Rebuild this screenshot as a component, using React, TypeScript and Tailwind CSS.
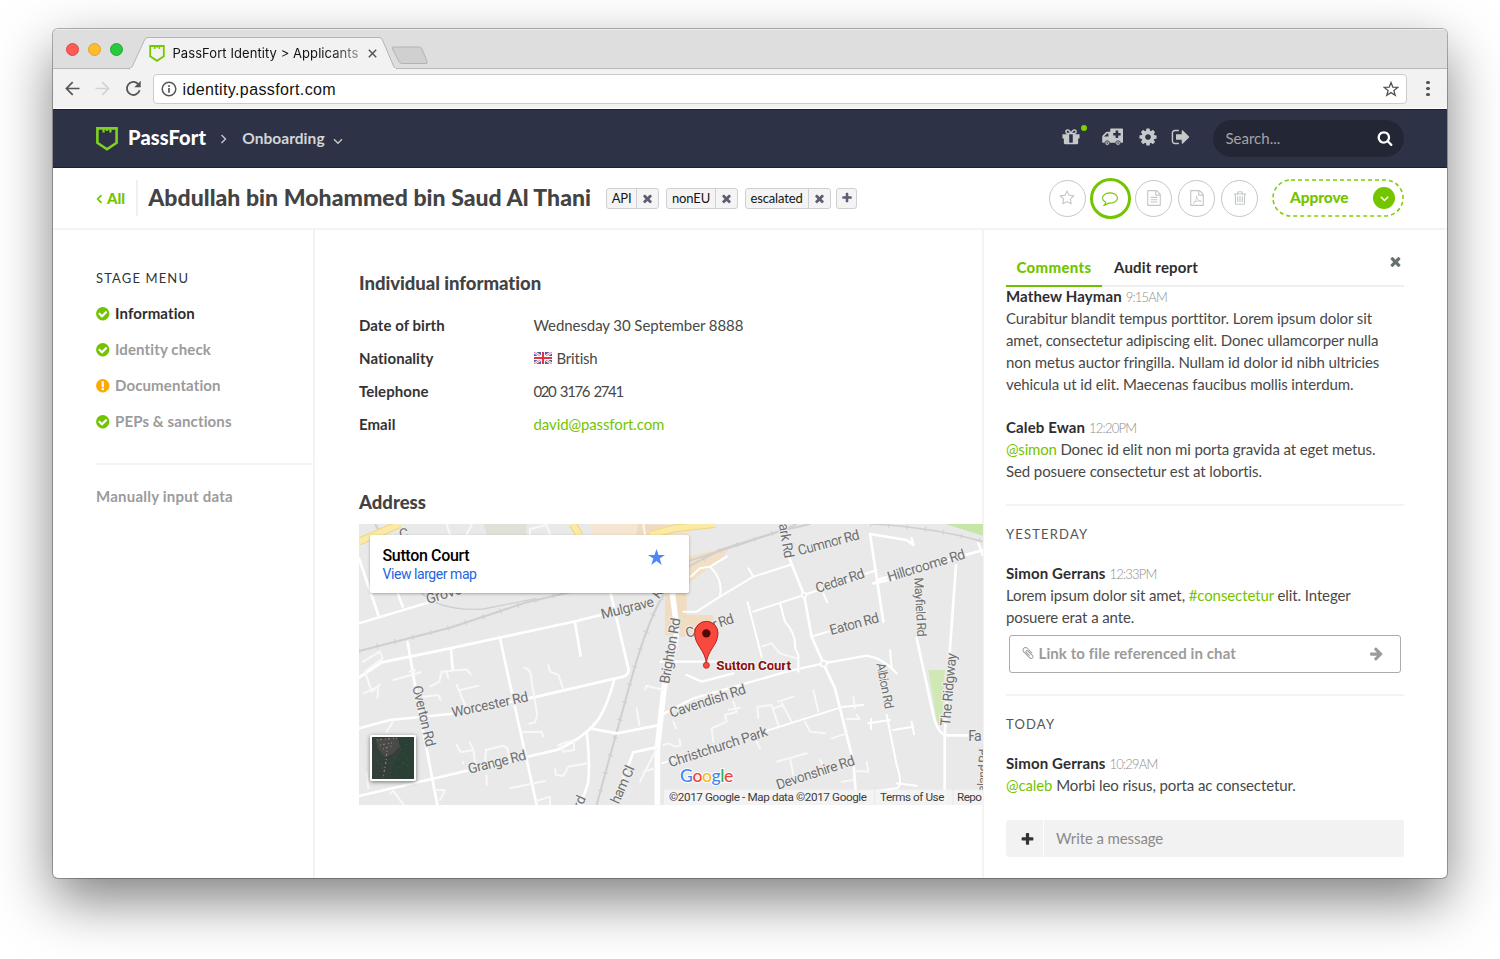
import type { ReactNode } from 'react';

const FA = {
  times: 'M1490 1322q0 40-28 68l-136 136q-28 28-68 28t-68-28l-294-294-294 294q-28 28-68 28t-68-28l-136-136q-28-28-28-68t28-68l294-294-294-294q-28-28-28-68t28-68l136-136q28-28 68-28t68 28l294 294 294-294q28-28 68-28t68 28l136 136q28 28 28 68t-28 68l-294 294 294 294q28 28 28 68z',
  plus: 'M1600 736v192q0 40-28 68t-68 28h-416v416q0 40-28 68t-68 28h-192q-40 0-68-28t-28-68v-416h-416q-40 0-68-28t-28-68v-192q0-40 28-68t68-28h416v-416q0-40 28-68t68-28h192q40 0 68 28t28 68v416h416q40 0 68 28t28 68z',
  check: 'M1412 734q0-28-18-46l-91-90q-19-19-45-19t-45 19l-408 407-226-226q-19-19-45-19t-45 19l-91 90q-18 18-18 46 0 27 18 45l362 362q19 19 45 19 27 0 46-19l543-543q18-18 18-45zm252 162q0 209-103 385.5t-279.5 279.5-385.5 103-385.5-103-279.5-279.5-103-385.5 103-385.5 279.5-279.5 385.5-103 385.5 103 279.5 279.5 103 385.5z',
  warn: 'M896 128q209 0 385.5 103t279.5 279.5 103 385.5-103 385.5-279.5 279.5-385.5 103-385.5-103-279.5-279.5-103-385.5 103-385.5 279.5-279.5 385.5-103zm128 1247v-190q0-14-9-23.5t-22-9.5h-192q-13 0-23 10t-10 23v190q0 13 10 23t23 10h192q13 0 22-9.5t9-23.5zm-2-344l18-621q0-12-10-18-10-8-24-8h-220q-14 0-24 8-10 6-10 18l17 621q0 10 10 17.5t24 7.5h185q14 0 23.5-7.5t10.5-17.5z',
  search: 'M1216 832q0-185-131.500-316.500t-316.500-131.500-316.500 131.500-131.500 316.500 131.500 316.500 316.500 131.500 316.500-131.500 131.500-316.500zm512 832q0 52-38 90t-90 38q-54 0-90-38l-343-342q-179 124-399 124-143 0-273.500-55.500t-225-150-150-225-55.500-273.500 55.500-273.500 150-225 225-150 273.500-55.500 273.500 55.500 225 150 150 225 55.500 273.500q0 220-124 399l343 343q37 37 37 90z',
  signOut: 'M704 1440q0 4 1 20t.5 26.500-3 23.500-10 19.500-20.500 6.500h-320q-119 0-203.500-84.500t-84.500-203.500v-704q0-119 84.500-203.500t203.500-84.500h320q13 0 22.500 9.500t9.500 22.500q0 4 1 20t.5 26.500-3 23.500-10 19.500-20.500 6.500h-320q-66 0-113 47t-47 113v704q0 66 47 113t113 47h312l11.500 1 11.500 3 8 5.500 7 9 2 13.500zm928-544q0 26-19 45l-544 544q-19 19-45 19t-45-19-19-45v-288h-448q-26 0-45-19t-19-45v-384q0-26 19-45t45-19h448v-288q0-26 19-45t45-19 45 19l544 544q19 19 19 45z',
  star: 'M1201 1004l306-297-422-62-189-382-189 382-422 62 306 297-73 421 378-199 377 199zm527-357q0 22-26 48l-363 354 86 500q1 7 1 20 0 50-41 50-19 0-40-12l-449-236-449 236q-22 12-40 12-21 0-31.500-14.500t-10.500-35.500q0-6 2-20l86-500-364-354q-25-27-25-48 0-37 56-46l502-73 225-455q19-41 49-41t49 41l225 455 502 73q56 9 56 46z',
  comment: 'M896 384q-204 0-381.500 69.500t-282 187.500-104.500 255q0 112 71.500 213.500t201.500 175.500l87 50-27 96q-24 91-70 172 152-63 275-171l43-38 57 6q69 8 130 8 204 0 381.500-69.500t282-187.500 104.500-255-104.500-255-282-187.500-381.500-69.500zm896 512q0 174-120 321.500t-326 233-450 85.500q-70 0-145-8-198 175-460 242-49 14-114 22h-5q-15 0-27-10.500t-16-27.500v-1q-3-4-.5-12t2-10 4.500-9.500l6-9 7-8.500 8-9q7-8 31-34.500t34.500-38 31-39.500 32.500-51 27-59 26-76q-157-89-247.500-220t-90.500-281q0-174 120-321.500t326-233 450-85.500 450 85.500 326 233 120 321.500z',
  file: 'M1596 380q28 28 48 76t20 88v1152q0 40-28 68t-68 28h-1344q-40 0-68-28t-28-68v-1600q0-40 28-68t68-28h896q40 0 88 20t76 48zm-444-244v376h376q-10-29-22-41l-313-313q-12-12-41-22zm384 1528v-1024h-416q-40 0-68-28t-28-68v-416h-768v1536h1280z',
  fileLines: 'M512 800q0-14 9-23t23-9h704q14 0 23 9t9 23v64q0 14-9 23t-23 9h-704q-14 0-23-9t-9-23v-64zm736 224q14 0 23 9t9 23v64q0 14-9 23t-23 9h-704q-14 0-23-9t-9-23v-64q0-14 9-23t23-9h704zm0 256q14 0 23 9t9 23v64q0 14-9 23t-23 9h-704q-14 0-23-9t-9-23v-64q0-14 9-23t23-9h704z',
  trash: 'M704 736v576q0 14-9 23t-23 9h-64q-14 0-23-9t-9-23v-576q0-14 9-23t23-9h64q14 0 23 9t9 23zm256 0v576q0 14-9 23t-23 9h-64q-14 0-23-9t-9-23v-576q0-14 9-23t23-9h64q14 0 23 9t9 23zm256 0v576q0 14-9 23t-23 9h-64q-14 0-23-9t-9-23v-576q0-14 9-23t23-9h64q14 0 23 9t9 23zm128 724v-948h-896v948q0 22 7 40.500t14.500 27 10.500 8.500h832q3 0 10.500-8.500t14.500-27 7-40.500zm-672-1076h448l-48-117q-7-9-17-11h-317q-10 2-17 11zm928 32v64q0 14-9 23t-23 9h-96v948q0 83-47 143.500t-113 60.500h-832q-66 0-113-58.500t-47-141.500v-952h-96q-14 0-23-9t-9-23v-64q0-14 9-23t23-9h309l70-167q15-37 54-63t79-26h320q40 0 79 26t54 63l70 167h309q14 0 23 9t9 23z',
  arrow: 'M1600 960q0 54-37 91l-651 651q-39 37-91 37-51 0-90-37l-75-75q-38-38-38-91t38-91l293-293h-704q-52 0-84.500-37.500t-32.500-90.500v-128q0-53 32.500-90.500t84.500-37.500h704l-293-294q-38-36-38-90t38-90l75-75q38-38 90-38 53 0 91 38l651 651q37 35 37 90z',
  cog: 'M1152 896q0-106-75-181t-181-75-181 75-75 181 75 181 181 75 181-75 75-181zm512-109v222q0 12-8 23t-20 13l-185 28q-19 54-39 91 35 50 107 138 10 12 10 25t-9 23q-27 37-99 108t-94 71q-12 0-26-9l-138-108q-44 23-91 38-16 136-29 186-7 28-36 28h-222q-14 0-24.500-8.500t-11.500-21.500l-28-184q-49-16-90-37l-141 107q-10 9-25 9-14 0-25-11-126-114-165-168-7-10-7-23 0-12 8-23 15-21 51-66.500t54-70.500q-27-50-41-99l-183-27q-13-2-21-12.500t-8-23.500v-222q0-12 8-23t19-13l186-28q14-46 39-92-40-57-107-138-10-12-10-24 0-10 9-23 26-36 98.500-107.500t94.500-71.500q13 0 26 10l138 107q44-23 91-38 16-136 29-186 7-28 36-28h222q14 0 24.500 8.500t11.500 21.500l28 184q49 16 90 37l142-107q9-9 24-9 13 0 25 10 129 119 165 170 7 8 7 22 0 12-8 23-15 21-51 66.500t-54 70.500q26 50 41 98l183 28q13 2 21 12.500t8 23.500z',
  gift: 'M1056 1356v-716h-320v716q0 25 18 38.500t46 13.500h192q28 0 46-13.500t18-38.500zm-456-844h195l-126-161q-26-31-69-31-40 0-68 28t-28 68 28 68 68 28zm688-96q0-40-28-68t-68-28q-43 0-69 31l-125 161h194q40 0 68-28t28-68zm376 256v320q0 14-9 23t-23 9h-96v416q0 40-28 68t-68 28h-1088q-40 0-68-28t-28-68v-416h-96q-14 0-23-9t-9-23v-320q0-14 9-23t23-9h440q-93 0-158.500-65.500t-65.500-158.500 65.500-158.500 158.500-65.500q107 0 168 77l128 165 128-165q61-77 168-77 93 0 158.500 65.500t65.500 158.500-65.500 158.500-158.500 65.500h440q14 0 23 9t9 23z',
  clip: 'M1596 1385q0 117-79 196t-196 79q-135 0-235-100l-777-776q-113-115-113-271 0-159 110-270t269-111q158 0 273 113l605 606q10 10 10 22 0 16-30.500 46.500t-46.500 30.500q-13 0-23-10l-606-607q-79-77-181-77-106 0-179 75t-73 181q0 105 76 181l776 777q63 63 145 63 64 0 106-42t42-106q0-82-63-145l-581-581q-26-24-60-24-29 0-48 19t-19 48q0 32 25 59l410 410q10 10 10 22 0 16-31 47t-47 31q-12 0-22-10l-410-410q-63-61-63-149 0-82 57-139t139-57q88 0 149 63l581 581q100 98 100 235z',
};

function Icon({ d, className, children }: { d: string; className: string; children?: ReactNode }) {
  return (
    <svg viewBox="0 0 1792 1792" className={`shrink-0 ${className}`} fill="currentColor">
      <path d={d} />
      {children}
    </svg>
  );
}

function Shield({ className }: { className: string }) {
  return (
    <svg viewBox="0 0 22 24" className={`shrink-0 ${className}`} fill="none" stroke="currentColor" strokeWidth="2.6">
      <path d="M1.400 1.400H20.600V15.800L11 22.300L1.400 15.800Z" />
      <path d="M7.600 1.500V5.600M14.400 1.500V5.600M11 1.500V4" strokeWidth="2.200" />
    </svg>
  );
}

function TabStrip() {
  return (
    <div className="flex h-10 shrink-0 items-stretch bg-[#dedede] shadow-[inset_0_-1px_0_#b9b9b9,inset_0_1px_0_#ececec]">
      <div className="flex w-[78px] items-center gap-[9px] pl-[12.5px]">
        <span className="size-[13px] rounded-full border border-[#e2463f] bg-[#fc5b57]" />
        <span className="size-[13px] rounded-full border border-[#e1a325] bg-[#fdbc2e]" />
        <span className="size-[13px] rounded-full border border-[#1fae30] bg-[#27c93f]" />
      </div>
      <div className="relative flex w-[266px] items-center pt-[9px] pl-[17.5px]">
        <svg className="absolute inset-0 overflow-visible" width="266" height="40" viewBox="0 0 266 40">
          <path d="M-2 39.500Q.5 39.500 1.500 37L13.500 11Q14.500 8.500 17 8.500H248Q250.500 8.500 251.500 11L262.500 37Q263.500 39.500 265.500 39.500V40H-2Z" fill="#f2f2f2" stroke="#b5b5b5" />
          <path d="M-1 40H265" stroke="#f2f2f2" strokeWidth="2" />
        </svg>
        <Shield className="relative h-[17px] w-4 text-[#75c900]" />
        <span className="relative ml-[8px] w-[187px] overflow-hidden whitespace-nowrap bg-[linear-gradient(90deg,#111_84%,#999_100%)] bg-clip-text font-['Inter'] text-[13px] tracking-[0.07px] text-transparent">
          PassFort Identity &gt; Applicants
        </span>
        <svg className="relative ml-[8px]" width="9" height="9" viewBox="0 0 9 9" stroke="#555" strokeWidth="1.500">
          <path d="M.8.8L8.200 8.200M8.200.8L.8 8.200" />
        </svg>
      </div>
      <svg className="-ml-[6px] mt-[17px]" width="38" height="19" viewBox="0 0 38 19">
        <path d="M2.500 1H28Q30 1 31 3L36 15.500Q37 17.500 35 17.500H11Q9 17.500 8 15.500L1.500 3Q.5 1 2.500 1Z" fill="#d0d0d0" stroke="#b3b3b3" />
      </svg>
    </div>
  );
}

function Toolbar() {
  return (
    <div className="flex h-10 shrink-0 items-center border-b border-white bg-[#f2f2f2] text-[#555]">
      <svg className="ml-[12px]" width="15" height="15" viewBox="0 0 15 15" fill="none" stroke="currentColor" strokeWidth="1.700">
        <path d="M14.500 7.500H1.500M7.700 1.200L1.400 7.500L7.700 13.800" />
      </svg>
      <svg className="ml-[15px] text-[#d2d2d2]" width="15" height="15" viewBox="0 0 15 15" fill="none" stroke="currentColor" strokeWidth="1.700">
        <path d="M.5 7.500H13.500M7.300 1.200L13.600 7.500L7.300 13.800" />
      </svg>
      <svg className="ml-[15px]" width="17" height="17" viewBox="0 0 17 17" fill="none" stroke="currentColor" strokeWidth="1.800">
        <path d="M14.600 10.300A6.500 6.500 0 1 1 13 3.900" />
        <path d="M15.700.8V7.200H9.300Z" fill="currentColor" stroke="none" />
      </svg>
      <div className="ml-[11px] flex h-[30px] w-[1254px] items-center rounded-[4px] border border-[#cbcbcb] bg-white px-[7px]">
        <svg width="16" height="16" viewBox="0 0 16 16" fill="none" stroke="#555" strokeWidth="1.500">
          <circle cx="8" cy="8" r="6.800" />
          <path d="M8 7V11.700M8 4.200V5.900" strokeWidth="1.700" />
        </svg>
        <span className="ml-[5.500px] flex-1 pt-[2px] font-['Liberation_Sans'] text-[16px] tracking-[0.38px] text-[#111]">identity.passfort.com</span>
        <svg width="16" height="16" viewBox="0 0 16 16" fill="none" stroke="#555" strokeWidth="1.300">
          <path d="M8 1.500L9.800 6.100L14.700 6.400L10.900 9.500L12.200 14.300L8 11.600L3.800 14.300L5.100 9.500L1.300 6.400L6.200 6.100Z" />
        </svg>
      </div>
      <div className="ml-[19px] flex flex-col gap-[2.500px]">
        <span className="size-[3.500px] rounded-full bg-[#555]" />
        <span className="size-[3.500px] rounded-full bg-[#555]" />
        <span className="size-[3.500px] rounded-full bg-[#555]" />
      </div>
    </div>
  );
}

function NavBar() {
  return (
    <div className="flex h-[59px] shrink-0 items-center border-y border-[#1b2033] bg-[#2e3246] pr-[43px] pl-[43px] text-[#c6c9c9]">
      <Shield className="h-6 w-[22px] text-[#7ed321]" />
      <span className="-mt-[3px] ml-[10px] text-[20px] font-black tracking-[0.15px] text-white">PassFort</span>
      <svg className="mt-px ml-[13.500px]" width="7" height="10" viewBox="0 0 7 10" fill="none" stroke="currentColor" strokeWidth="1.400">
        <path d="M1.500 1L5.500 5L1.500 9" />
      </svg>
      <span className="ml-[15.500px] text-[15.5px] font-bold tracking-[0.05px] text-[#d3d5d6]">Onboarding</span>
      <svg className="mt-[5px] ml-[8px]" width="10" height="7" viewBox="0 0 10 7" fill="none" stroke="currentColor" strokeWidth="1.400">
        <path d="M1 1.200L5 5.200L9 1.200" />
      </svg>
      <div className="-mt-[3px] ml-auto flex items-center">
        <div className="relative">
          <Icon d={FA.gift} className="size-5" />
          <span className="absolute -top-[2px] left-[19.500px] size-[6px] rounded-full bg-[#7fd000]" />
        </div>
        <svg className="ml-[21px]" width="21" height="18" viewBox="0 0 21 18" fill="currentColor">
          <path
            fillRule="evenodd"
            d="M9 .5H20.200Q21 .5 21 1.300V14Q21 14.800 20.200 14.800H18.700A2.800 2.800 0 0 1 13.200 14.800H8A2.800 2.800 0 0 1 2.500 14.800H1Q.2 14.800.2 14V9Q.2 8 .9 7.200L3.900 4.300Q4.500 3.700 5.300 3.700H8.200V1.300Q8.200.5 9 .5ZM2 8.600H6.400V5.600H5.100L2.500 8.100ZM13.600 2.600V5H11.200V7.600H13.600V10H16.200V7.600H18.600V5H16.200V2.600Z"
          />
          <circle cx="5.200" cy="15.100" r="2.300" stroke="#2e3246" strokeWidth=".9" />
          <circle cx="16" cy="15.100" r="2.300" stroke="#2e3246" strokeWidth=".9" />
          <circle cx="5.200" cy="15.100" r=".8" fill="#2e3246" />
          <circle cx="16" cy="15.100" r=".8" fill="#2e3246" />
        </svg>
        <Icon d={FA.cog} className="ml-[15px] size-5" />
        <Icon d={FA.signOut} className="ml-[13px] size-5" />
      </div>
      <div className="ml-[22px] flex h-[37px] w-[191px] items-center justify-between rounded-full bg-[#232634] pr-[11px] pl-[12.500px]">
        <span className="text-[15px] text-[#a3a4a8]">Search...</span>
        <Icon d={FA.search} className="mb-px size-4 text-white" />
      </div>
    </div>
  );
}

function Tag({ label }: { label: string }) {
  return (
    <span className="flex h-[21px] items-stretch rounded-[3px] border border-[#cfcfd6] bg-[#f4f4f5] text-[13px] tracking-[-0.15px] text-[#151515]">
      <span className="flex items-center px-[5px] pt-[2px]">{label}</span>
      <span className="flex w-[22px] items-center justify-center border-l border-[#cfcfd6]">
        <Icon d={FA.times} className="size-[13px] text-[#5f5d74]" />
      </span>
    </span>
  );
}

function RoundButton({ children }: { children: ReactNode }) {
  return <span className="flex size-[37px] items-center justify-center rounded-full border border-[#c3c8c6] text-[#c3c8c6]">{children}</span>;
}

function PageHeader() {
  return (
    <div className="flex h-[62px] shrink-0 items-center border-b-2 border-[#f3f3f3] pr-[43px] pl-[43px]">
      <svg className="mt-px" width="7" height="10" viewBox="0 0 7 10" fill="none" stroke="#72c400" strokeWidth="1.700">
        <path d="M5.500 1.200L1.700 5L5.500 8.800" />
      </svg>
      <span className="ml-[4px] text-[15px] font-black text-[#72c400]">All</span>
      <span className="ml-[11px] h-9 w-[1.500px] bg-[#f0f0f0]" />
      <h1 className="-mt-[2px] ml-[10.500px] w-[445px] whitespace-nowrap text-[23px] font-black tracking-[0.04px] text-[#434343]">Abdullah bin Mohammed bin Saud Al Thani</h1>
      <div className="ml-[12.500px] flex gap-[6.500px]">
        <Tag label="API" />
        <Tag label="nonEU" />
        <Tag label="escalated" />
        <span className="-ml-px flex size-[21px] items-center justify-center rounded-[3px] border border-[#cfcfd6] bg-[#f4f4f5]">
          <Icon d={FA.plus} className="size-[12px] text-[#5f5d74]" />
        </span>
      </div>
      <div className="ml-auto flex items-center">
        <RoundButton>
          <Icon d={FA.star} className="size-4" />
        </RoundButton>
        <span className="mr-[4.500px] ml-[4px] flex size-[41px] items-center justify-center rounded-full border-[3.500px] border-[#75c400] text-[#75c400]">
          <Icon d={FA.comment} className="size-4" />
        </span>
        <RoundButton>
          <Icon d={FA.file} className="size-4">
            <path d={FA.fileLines} />
          </Icon>
        </RoundButton>
        <span className="w-[6px]" />
        <RoundButton>
          <Icon d={FA.file} className="size-4">
            <path d="M470 1500C640 1400 900 1000 850 700M850 700C860 1000 1050 1230 1340 1290M560 1390C800 1230 1100 1170 1330 1230" fill="none" stroke="currentColor" strokeWidth="90" strokeLinecap="round" />
          </Icon>
        </RoundButton>
        <span className="w-[6px]" />
        <RoundButton>
          <Icon d={FA.trash} className="size-4" />
        </RoundButton>
      </div>
      <div className="relative ml-[14px] flex h-[38px] w-[132px] items-center justify-between pr-[9px] pl-[18px]">
        <svg className="absolute inset-0" width="132" height="38" viewBox="0 0 132 38">
          <rect x="1" y="1" width="130" height="36" rx="18" fill="none" stroke="#7fd000" strokeWidth="1.600" strokeDasharray="4 3" />
        </svg>
        <span className="relative text-[15.5px] font-black tracking-[-0.1px] text-[#75c400]">Approve</span>
        <span className="relative flex size-[22px] items-center justify-center rounded-full bg-[#75c400]">
          <svg className="mt-[2px]" width="9" height="6" viewBox="0 0 9 6" fill="none" stroke="#fff" strokeWidth="1.400">
            <path d="M.8.8L4.500 4.500L8.200.8" />
          </svg>
        </span>
      </div>
    </div>
  );
}

const stages = [
  { label: 'Information', icon: 'check', active: true },
  { label: 'Identity check', icon: 'check' },
  { label: 'Documentation', icon: 'warn' },
  { label: 'PEPs & sanctions', icon: 'check' },
];

function Sidebar() {
  return (
    <aside className="w-[262px] shrink-0 border-r-2 border-[#f3f3f3] pt-[39px] pl-[43px]">
      <h3 className="h-[18px] text-[13px] leading-[18px] tracking-[1.130px] text-[#333]">STAGE MENU</h3>
      <ul className="mt-[8.500px]">
        {stages.map((s) => (
          <li key={s.label} className="flex h-9 items-center">
            <Icon d={s.icon === 'warn' ? FA.warn : FA.check} className={s.icon === 'warn' ? '-ml-px size-[15.500px] text-[#ffa800]' : '-ml-px size-[15.500px] text-[#72c400]'} />
            <span className={s.active ? 'ml-[4.500px] text-[15px] font-bold tracking-[0.12px] text-[#2e2e2e]' : 'ml-[4.500px] text-[15px] font-bold tracking-[0.12px] text-[#9b9b9b]'}>{s.label}</span>
          </li>
        ))}
      </ul>
      <div className="mt-[23.500px] border-t-2 border-[#f3f3f3] pt-[20px] text-[15px] leading-[22px] font-bold tracking-[0.23px] text-[#9b9b9b]">Manually input data</div>
    </aside>
  );
}

function Flag() {
  return (
    <svg width="18" height="12" viewBox="0 0 18 12" className="mr-[5px]">
      <rect width="18" height="12" fill="#4a5fae" />
      <path d="M0 0L18 12M18 0L0 12" stroke="#fff" strokeWidth="2.600" />
      <path d="M0 0L18 12M18 0L0 12" stroke="#e8626c" strokeWidth=".9" />
      <path d="M9 0V12M0 6H18" stroke="#fff" strokeWidth="4" />
      <path d="M9 0V12M0 6H18" stroke="#e03440" strokeWidth="2.200" />
    </svg>
  );
}

function Label({ x, y, w, r, s = 42, children }: { x: number; y: number; w: number; r: number; s?: number; children: ReactNode }) {
  return (
    <text transform={`translate(${x} ${y}) rotate(${r})`} fontSize={s} textLength={w} fill="#6f6f6f" stroke="#ededed" strokeWidth="7" strokeLinejoin="round" paintOrder="stroke">
      {children}
    </text>
  );
}

function MapCanvas() {
  return (
    <svg width="624" height="281" viewBox="27 27 1872 843" fontFamily="Roboto, sans-serif">
      <rect x="27" y="27" width="1872" height="843" fill="#e9e9e9" />
      {/* built-up areas and parks */}
      <path d="M400 27H530L528 60H412Z" fill="#dfe0d8" />
      <path d="M720 27H990V100H735Z" fill="#f5e6d3" />
      <path d="M865 27L960 30L930 100H850Z" fill="#efdcc0" />
      <path d="M958 27H1020L1010 110L958 170Z" fill="#f2e3cf" />
      <path d="M1010 125L1140 95L1120 125L1010 210Z" fill="#f2dfc4" />
      <path d="M946 230H1010V300L1090 300V345L1040 350L1000 366L975 360H944Z" fill="#f0dcc0" />
      <path d="M1786 27H1899V62Z" fill="#c5e6a6" />
      <path d="M1735 465H1784L1776 630H1762Z" fill="#d0e8b4" />
      {/* railways */}
      <g fill="none" stroke="#cfcfcf" strokeWidth="6">
        <path d="M27 408L300 338L530 262L650 234L1010 158L1110 105L1290 48L1380 27" />
        <path d="M210 230Q270 290 400 282L560 250" strokeWidth="4" />
        <path d="M1010 140L1180 85L1300 45L1340 27M1560 27Q1740 35 1899 80" strokeWidth="5" />
        <path d="M945 232Q900 300 850 470L740 869" />
        <path d="M75 27L95 60" />
      </g>
      <g stroke="#cfcfcf" strokeWidth="16" strokeDasharray="3 52" fill="none">
        <path d="M27 408L300 338L530 262L650 234M1010 158L1110 105L1290 48M1560 27Q1740 35 1899 80M935 250Q900 300 850 470L740 869" />
      </g>
      {/* main roads */}
      <path d="M27 80L150 27M668 27L690 62M900 60L975 40L1095 27" fill="none" stroke="#f1d884" strokeWidth="24" />
      <path d="M27 80L150 27M668 27L690 62M900 60L975 40L1095 27" fill="none" stroke="#fbeaa6" strokeWidth="17" />
      <path d="M967 235L978 320Q985 370 960 440L942 520L922 700V869" fill="none" stroke="#fff" strokeWidth="17" />
      {/* residential roads */}
      <g fill="none" stroke="#fff" strokeWidth="8" strokeLinejoin="round" strokeLinecap="round">
        <path d="M27 325L360 225M27 488L95 442L300 400L680 318L890 265" />
        <path d="M27 640L120 615L300 597L560 545L820 485Q838 478 835 460L782 235" />
        <path d="M27 843L360 765L620 705Q700 670 740 620Q770 580 793 492" />
        <path d="M450 370L500 600L560 869M173 382L210 600L262 869M27 130L85 300M120 170L158 275M675 322L692 422M303 402L308 462" />
        <path d="M720 640L800 655L920 632M710 650Q722 760 713 810L690 869M850 712L918 697M850 712L820 790" />
        <path d="M1022 185L1050 160L1080 155Q1120 195 1110 240M1000 290L1040 290L1110 245L1210 185L1320 150M1210 185L1195 160M1080 155L1130 125" strokeWidth="6" />
        <path d="M1318 130L1362 240L1385 365L1420 445L1455 520L1510 740L1520 869" />
        <path d="M1210 290L1362 240L1580 165M1200 290L1235 425M1193 262L1200 290M1290 265L1305 320Q1340 360 1335 400L1345 420V470M1385 365L1450 345M1420 235L1432 262" strokeWidth="6" />
        <path d="M930 602L1030 550L1310 470L1420 445L1550 422Q1600 430 1640 475M1010 480L1055 500L1150 475M932 440H1110" strokeWidth="7" />
        <path d="M1225 655L1480 575L1540 570M935 745L1100 690" strokeWidth="6" />
        <path d="M1560 57L1600 320M1560 57L1670 75L1690 90L1685 70M1580 195L1740 150L1899 105M1570 205L1640 190" />
        <path d="M1818 150L1800 400L1784 660V869M1700 370L1750 600Q1765 660 1790 661H1870M1885 85L1899 120" />
        <path d="M1610 600L1640 750Q1660 810 1640 820L1560 830M1555 625L1620 615M1630 645L1690 635M1685 620L1692 658M1563 612V642M1620 405L1625 460M1640 805L1700 812" strokeWidth="6" />
      </g>
      <g fill="none" stroke="#f8f8f8" strokeWidth="6" strokeLinejoin="round" strokeLinecap="round">
        <path d="M38 440L90 410L98 430L45 470L65 530L90 508M40 535L85 515L82 550M130 495L212 472M195 465L180 470" />
        <path d="M240 515L268 500L275 470L350 463L362 478M290 470L295 490M320 510L345 570M330 525L385 512M220 545L265 540L272 555" />
        <path d="M522 458Q545 460 545 500L562 600L555 622L538 626M595 450L600 470L625 480L640 522M518 652L575 650L580 665" />
        <path d="M320 690L332 712L370 705L360 683M370 705L375 740M405 740L408 705L460 692L472 700L480 740M410 780V810M340 745V740M630 690L640 710L672 705V675L625 690" />
        <path d="M615 760L618 780L640 782L655 755L713 745M250 825L285 825L270 855M120 835L130 828L160 869M50 775L55 820M560 858L600 845V869M480 820L585 798" />
        <path d="M885 525L890 512L940 525M860 580L868 630M920 700L870 800M880 770L915 760M110 650L128 622" />
        <path d="M1235 395L1265 385L1290 415L1340 430M1225 610L1222 575L1265 570L1285 632M1270 580L1300 570M1285 560L1330 545M1295 565L1325 620M1390 525L1405 590" />
        <path d="M1090 680L1085 640L1130 620L1125 600L1160 590L1150 560M1135 585L1170 578M1210 660L1230 700M1365 620L1380 650L1425 655M1445 670L1490 655M1510 545L1515 580M1520 600L1528 612L1490 612" />
        <path d="M940 690L955 685L975 695L992 690L988 672M1280 740L1370 715M1320 730L1330 780M1410 735L1425 760M1475 800L1510 795M1550 740L1555 770L1520 768M970 620L978 640" />
        <path d="M290 27L300 58M365 30L350 58M540 58V42L590 30L600 58M880 27L885 58" />
      </g>
      <circle cx="1362" cy="240" r="7" fill="#e9e9e9" stroke="#fff" strokeWidth="5" />
      <circle cx="1421" cy="446" r="9" fill="#e9e9e9" stroke="#fff" strokeWidth="5" />
      {/* street names */}
      <Label x={150} y={72} w={32} r={-10}>C</Label>
      <Label x={233} y={267} w={170} r={-17}>Grove Rd</Label>
      <Label x={757} y={312} w={162} r={-14}>Mulgrave</Label>
      <Label x={926} y={254} w={45} r={-52}>Rd</Label>
      <Label x={187} y={515} w={187} r={77}>Overton Rd</Label>
      <Label x={308} y={607} w={234} r={-12}>Worcester Rd</Label>
      <Label x={358} y={776} w={178} r={-14}>Grange Rd</Label>
      <Label x={957} y={508} w={200} r={-80}>Brighton Rd</Label>
      <Label x={806} y={869} w={120} r={-66}>ham Cl</Label>
      <Label x={693} y={884} w={38} r={-66}>rd</Label>
      <Label x={1012} y={369} w={150} r={-18}>Cedar Rd</Label>
      <Label x={1286} y={28} w={105} r={80}>ark Rd</Label>
      <Label x={1348} y={121} w={190} r={-15}>Cumnor Rd</Label>
      <Label x={1402} y={234} w={152} r={-18}>Cedar Rd</Label>
      <Label x={1617} y={200} w={242} r={-17}>Hillcroome Rd</Label>
      <Label x={1693} y={188} w={178} r={87} s={38}>Mayfield Rd</Label>
      <Label x={1443} y={360} w={152} r={-15}>Eaton Rd</Label>
      <Label x={964} y={608} w={238} r={-18}>Cavendish Rd</Label>
      <Label x={1579} y={446} w={140} r={79} s={38}>Albion Rd</Label>
      <Label x={1800} y={634} w={220} r={-85}>The Ridgway</Label>
      <Label x={961} y={757} w={310} r={-18}>Christchurch Park</Label>
      <Label x={1284} y={824} w={245} r={-18}>Devonshire Rd</Label>
      <Label x={1855} y={679} w={40} r={0}>Fa</Label>
      <Label x={1908} y={832} w={130} r={-87} s={38}>aland Rd</Label>
      {/* place marker */}
      <path d="M1069 447C1067 405 1034 392 1034 354A35 35 0 0 1 1104 354C1104 392 1071 405 1069 447Z" fill="#f9493e" stroke="#b3261e" strokeWidth="3" />
      <circle cx="1069" cy="355" r="12.500" fill="#4f0a06" />
      <circle cx="1069" cy="451" r="9" fill="#f9493e" stroke="#b3261e" strokeWidth="2.500" />
      <text x="1099" y="464" fontSize="41" fontWeight="700" textLength="224" fill="#8b0f0c" stroke="#f2f2f2" strokeWidth="7" paintOrder="stroke">Sutton Court</text>
      {/* attribution */}
      <rect x="942" y="824" width="957" height="46" fill="#f5f5f5" fillOpacity=".85" />
      <path d="M1574 824V870M1809 824V870" stroke="#e3e3e3" strokeWidth="2" />
      <text y="857" fontSize="35" fill="#3c3c3c">
        <tspan x="957" textLength="594">©2017 Google - Map data ©2017 Google</tspan>
        <tspan x="1590" textLength="193">Terms of Use</tspan>
        <tspan x="1821" textLength="75">Repo</tspan>
      </text>
      <text x="990" y="802" fontSize="53" fontFamily="Lato, sans-serif" fontWeight="500" textLength="160" stroke="#fff" strokeWidth="6" paintOrder="stroke">
        <tspan fill="#4285f4">G</tspan>
        <tspan fill="#ea4335">o</tspan>
        <tspan fill="#fbbc05">o</tspan>
        <tspan fill="#4285f4">g</tspan>
        <tspan fill="#34a853">l</tspan>
        <tspan fill="#ea4335">e</tspan>
      </text>
    </svg>
  );
}

function AddressMap() {
  return (
    <div className="relative h-[281px] w-[624px] overflow-hidden">
      <MapCanvas />
      <div className="absolute top-[11px] left-[11px] flex h-[58px] w-[319px] justify-between rounded-[2px] bg-white pt-[10.500px] pr-[24px] pl-[12.500px] font-['Roboto'] shadow-[0_1px_3px_rgba(0,0,0,0.3)]">
        <div>
          <div className="text-[16px] leading-[19px] font-medium tracking-[-0.35px] text-black">Sutton Court</div>
          <div className="text-[14px] leading-[19px] tracking-[-0.44px] text-[#2465e0]">View larger map</div>
        </div>
        <svg className="mt-[3px]" width="17" height="16" viewBox="0 0 17 16" fill="#4f86f7">
          <path d="M8.500 0L10.500 6H17L11.700 9.600L13.700 16L8.500 12.100L3.300 16L5.300 9.600L0 6H6.500Z" />
        </svg>
      </div>
      <svg className="absolute top-[211px] left-[10.500px] rounded-[2px] border-2 border-white shadow-[0_1px_4px_rgba(0,0,0,0.5)]" width="46" height="46" viewBox="0 0 42 42">
        <rect width="42" height="42" fill="#33403a" />
        <path d="M22 0H42V42H18L22 28L30 14Z" fill="#2b4034" />
        <path d="M4 2L26 1L28 10L20 17L13 20L6 12Z" fill="#4c4a47" />
        <g fill="none" stroke="#858280" strokeWidth="1.200" strokeDasharray="1 2 2 3">
          <path d="M5 3L25 1M8 8L20 6M11 12L20 9M15 14L14 24L11 41" />
        </g>
        <g fill="none" stroke="#4b5b50" strokeWidth="1" strokeDasharray="1 4">
          <path d="M2 20L12 30L4 38M22 20L38 30M24 34L40 18M30 4L40 12M6 26L18 36M28 12L36 24" />
        </g>
      </svg>
    </div>
  );
}

const info: { label: string; value: ReactNode; className: string }[] = [
  { label: 'Date of birth', value: 'Wednesday 30 September 8888', className: 'tracking-[-0.08px] text-[#484848]' },
  { label: 'Nationality', value: 'British', className: 'tracking-[-0.2px] text-[#484848]' },
  { label: 'Telephone', value: '020 3176 2741', className: 'tracking-[-1.400px] [word-spacing:2px] text-[#484848]' },
  { label: 'Email', value: 'david@passfort.com', className: 'tracking-[-0.1px] text-[#75c400]' },
];

function Details() {
  return (
    <main className="flex w-[667px] shrink-0 flex-col pt-[41px] pl-[44px]">
      <h2 className="text-[18.5px] leading-6 font-black tracking-[-0.03px] text-[#434343]">Individual information</h2>
      <dl className="mt-[14px]">
        {info.map((row) => (
          <div key={row.label} className="flex h-[32.800px] items-center text-[15px]">
            <dt className="w-[174.500px] font-bold tracking-[0.05px] text-[#333]">{row.label}</dt>
            <dd className={`flex items-center ${row.className}`}>
              {row.label === 'Nationality' && <Flag />}
              {row.value}
            </dd>
          </div>
        ))}
      </dl>
      <h2 className="mt-[50px] mb-[10px] text-[18.5px] leading-6 font-black text-[#434343]">Address</h2>
      <AddressMap />
    </main>
  );
}

function Comment({ author, time, children }: { author: string; time: string; children: ReactNode }) {
  return (
    <div className="text-[15px] leading-[21.900px] text-[#484848]">
      <div className="h-[21.900px]">
        <span className="font-bold tracking-[0.13px] text-[#2e2e2e]">{author}</span>{' '}
        <span className="text-[13px] leading-none font-light tracking-[-0.78px] text-[#8d8d8d]">{time}</span>
      </div>
      <p className="tracking-[-0.1px] whitespace-pre-line">{children}</p>
    </div>
  );
}

function CommentsPanel() {
  return (
    <aside className="flex min-w-0 flex-1 flex-col border-l-2 border-[#f3f3f3] pr-[43px] pl-[22px]">
      <div className="flex h-[57px] shrink-0 items-stretch border-b-2 border-[#efefef] text-[15px] font-bold">
        <div className="-mb-[2px] flex w-24 items-center justify-center border-b-2 border-[#6cc000] pt-[19px] font-black tracking-[0.35px] text-[#72c400]">Comments</div>
        <div className="flex flex-1 items-center pt-[19px] pl-[12px] tracking-[0.18px] text-[#2e2e2e]">Audit report</div>
        <Icon d={FA.times} className="mt-[24px] mr-[1.500px] size-[15px] text-[#66706e]" />
      </div>
      <div className="-mt-px">
        <Comment author="Mathew Hayman" time="9:15AM">
          {'Curabitur blandit tempus porttitor. Lorem ipsum dolor sit\namet, consectetur adipiscing elit. Donec ullamcorper nulla\nnon metus auctor fringilla. Nullam id dolor id nibh ultricies\nvehicula ut id elit. Maecenas faucibus mollis interdum.'}
        </Comment>
        <div className="h-[21.500px]" />
        <Comment author="Caleb Ewan" time="12:20PM">
          <span className="tracking-[-0.2px] text-[#75c400]">@simon</span>
          {' Donec id elit non mi porta gravida at eget metus.\nSed posuere consectetur est at lobortis.'}
        </Comment>
        <div className="mt-[21.500px] border-t-2 border-[#f3f3f3] pt-[17.500px] text-[13px] leading-[20px] tracking-[1.180px] text-[#555]">YESTERDAY</div>
        <div className="h-[19.500px]" />
        <Comment author="Simon Gerrans" time="12:33PM">
          {'Lorem ipsum dolor sit amet, '}
          <span className="text-[#75c400]">#consectetur</span>
          {' elit. Integer\nposuere erat a ante.'}
        </Comment>
        <div className="mx-[3px] mt-[6px] flex h-[38px] items-center rounded-[3px] border-[1.500px] border-[#ababab] pr-[16px] pb-px pl-[11px] text-[15px] font-bold tracking-[0.1px] text-[#9b9b9b]">
          <Icon d={FA.clip} className="mr-[3.500px] size-[14px]" />
          <span className="flex-1">Link to file referenced in chat</span>
          <Icon d={FA.arrow} className="size-[15px]" />
        </div>
        <div className="mt-[21px] border-t-2 border-[#f3f3f3] pt-[18px] text-[13px] leading-[20px] tracking-[1.180px] text-[#555]">TODAY</div>
        <div className="h-[19.500px]" />
        <Comment author="Simon Gerrans" time="10:29AM">
          <span className="text-[#75c400]">@caleb</span>
          {' Morbi leo risus, porta ac consectetur.'}
        </Comment>
        <div className="mt-[22.500px] flex h-[37px] items-center rounded-[3px] bg-[#f2f2f2]">
          <div className="flex h-full w-[38px] items-center justify-center border-r-[1.500px] border-white pt-[2px] pl-[5px]">
            <Icon d={FA.plus} className="size-[15px] text-[#333]" />
          </div>
          <span className="pl-[12px] text-[15px] tracking-[-0.1px] text-[#8a8a8a]">Write a message</span>
        </div>
      </div>
    </aside>
  );
}

export default function App() {
  return (
    <div className="h-[959px] w-[1500px] overflow-hidden bg-white pt-[29px] pl-[53px] font-['Lato',sans-serif]">
      <div className="flex h-[849px] w-[1394px] flex-col rounded-[5px] bg-white shadow-[0_0_0_1px_rgba(0,0,0,0.28),0_22px_55px_rgba(0,0,0,0.5)]">
        <div className="flex h-full flex-col overflow-hidden rounded-[5px]">
          <TabStrip />
          <Toolbar />
          <NavBar />
          <PageHeader />
          <div className="flex min-h-0 flex-1">
            <Sidebar />
            <Details />
            <CommentsPanel />
          </div>
        </div>
      </div>
    </div>
  );
}
